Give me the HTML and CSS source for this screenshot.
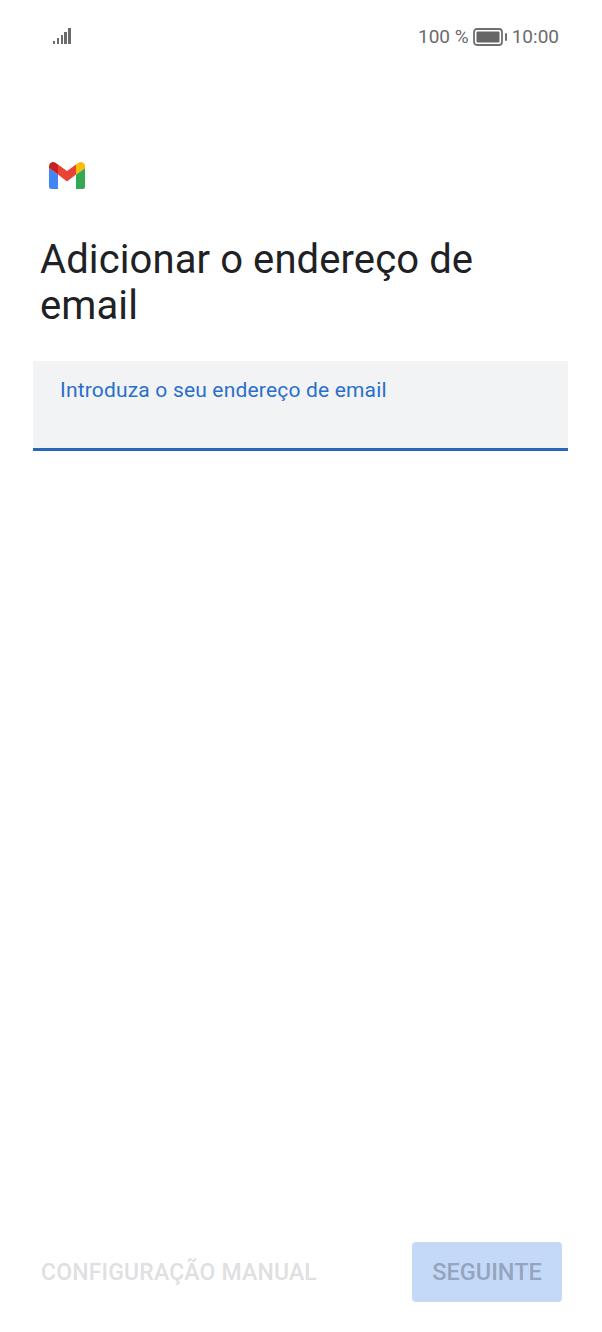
FILE: index.html
```html
<!DOCTYPE html>
<html>

<head>
    <title>Adicionar o endereço de email</title>
    <meta name="viewport" content="width=device-width, initial-scale=1.0">
    <link rel="stylesheet" href="styles.css">
</head>

<body>
    <div class="status-bar">
        <div class="signal">
            <span class="bar bar-1"></span>
            <span class="bar bar-2"></span>
            <span class="bar bar-3"></span>
            <span class="bar bar-4"></span>
            <span class="bar bar-5"></span>
        </div>
        <div class="status-right">
            <span>100 %</span>
            <svg class="battery" width="35" height="18" viewBox="0 0 35 18">
                <rect x="1" y="1" width="28" height="16" rx="3" fill="none" stroke="#6f6f6f" stroke-width="1.8"/>
                <rect x="3.5" y="3.5" width="23" height="11" rx="1" fill="#666"/>
                <rect x="32" y="5" width="2" height="8" rx="1" fill="#6f6f6f"/>
            </svg>
            <span>10:00</span>
        </div>
    </div>

    <div class="content">
        <svg class="gmail-logo" width="38" height="29" viewBox="0 0 38 29">
            <path d="M1 7 L1 25.5 Q1 28 3.5 28 L10 28 L10 13.5 Z" fill="#4285f4"/>
            <path d="M28 13.5 L28 28 L34.5 28 Q37 28 37 25.5 L37 7 Z" fill="#34a853"/>
            <path d="M10 13.5 L19 20.5 L28 13.5 L28 3.5 L19 10 L10 3.5 Z" fill="#ea4335"/>
            <path d="M1 7 L10 13.5 L10 3.5 L7 1.6 C4.5 0 1 2 1 5.2 Z" fill="#c5221f"/>
            <path d="M28 3.5 L28 13.5 L37 7 L37 5.2 C37 2 33.5 0 31 1.6 Z" fill="#fbbc04"/>
        </svg>

        <h1 class="title">Adicionar o endereço de email</h1>

        <div class="email-field">
            <label class="email-label">Introduza o seu endereço de email</label>
        </div>
    </div>

    <div class="footer">
        <span class="manual-link">CONFIGURAÇÃO MANUAL</span>
        <button class="next-button" disabled>SEGUINTE</button>
    </div>
</body>

</html>
```

FILE: styles.css
```css
/* Basic styling */
html,
body {
    height: 100%;
}

body {
    font-family: Roboto, "Noto Sans", sans-serif;
    margin: 0;
    background-color: #fff;
    display: flex;
    flex-direction: column;
    box-sizing: border-box;
    height: 1332px;
    overflow: hidden;
}

/* Status bar */
.status-bar {
    display: flex;
    justify-content: space-between;
    align-items: center;
    height: 20px;
    padding: 26px 43px 0 53px;
    color: #6b6b6b;
    font-size: 19px;
}

.signal {
    display: flex;
    align-items: flex-end;
    gap: 1.4px;
    height: 17px;
    margin-top: -1px;
}

.bar {
    width: 2.4px;
    background-color: #6b6b6b;
}

.bar-1 { height: 3px; }
.bar-2 { height: 6px; }
.bar-3 { height: 9px; }
.bar-4 { height: 12px; }
.bar-5 { height: 16px; }

.status-right {
    display: flex;
    align-items: center;
    gap: 4px;
    padding-top: 1px;
}

/* Main content */
.content {
    flex: 1;
    display: flex;
    flex-direction: column;
    padding: 115px 33px 0;
}

.gmail-logo {
    margin-left: 15px;
}

.title {
    font-size: 40px;
    font-weight: 400;
    letter-spacing: 0.1px;
    line-height: 46px;
    color: #202124;
    margin: 47px 0 32px 7px;
    width: 480px;
}

/* Email input */
.email-field {
    height: 87px;
    background-color: #f1f3f4;
    border-bottom: 3px solid #2a66b8;
    box-sizing: content-box;
    width: 535px;
}

.email-label {
    display: block;
    margin: 17px 0 0 27px;
    font-size: 21px;
    letter-spacing: 0.18px;
    line-height: 24px;
    color: #2a6fcb;
}

/* Bottom actions */
.footer {
    display: flex;
    justify-content: space-between;
    align-items: center;
    padding: 0 40px 30px 41px;
}

.manual-link {
    font-size: 23px;
    font-weight: 500;
    letter-spacing: 0.17px;
    color: #dfe0e2;
}

.next-button {
    width: 150px;
    height: 60px;
    border: none;
    border-radius: 4px;
    background-color: #c4d9f7;
    color: #94a5bf;
    font-family: inherit;
    font-size: 23.5px;
    font-weight: 500;
}
```
